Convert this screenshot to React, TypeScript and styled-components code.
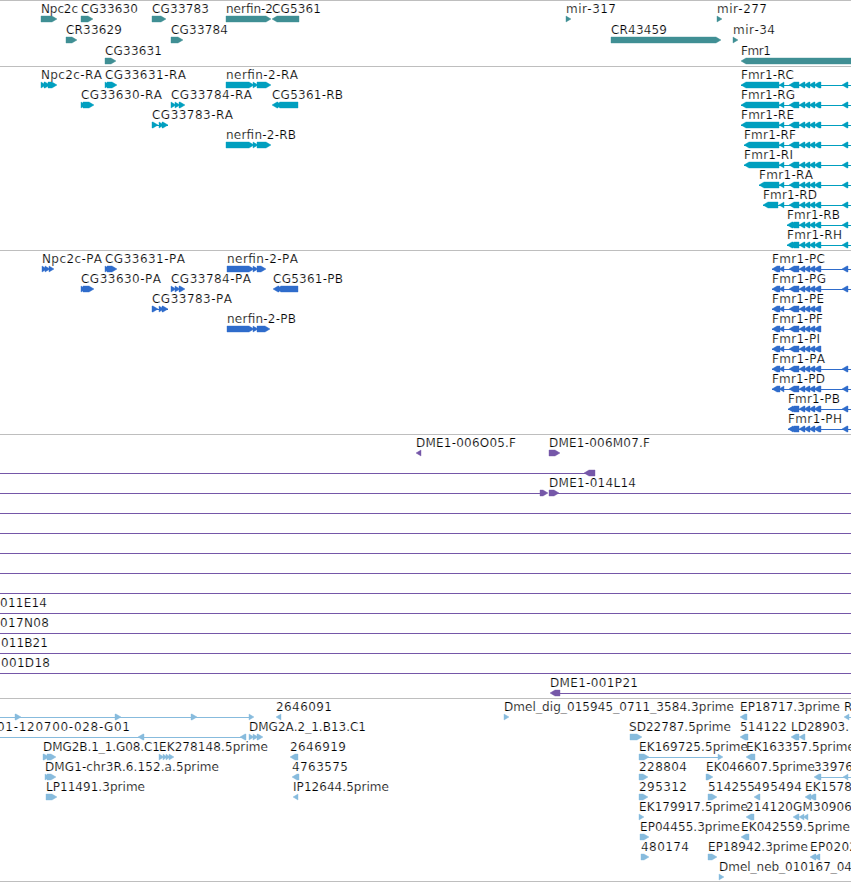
import React from "react";
import styled, { createGlobalStyle } from "styled-components";

type Direction = "left" | "right";

// [text, x, width]
type ILabel = [string, number, number];

// [start, end, direction]
type IExon = [number, number, Direction];

// [start, end]
type ILine = [number, number];

interface IRow {
  labels?: ILabel[];
  exons?: IExon[];
  lines?: ILine[];
}

interface ITrack {
  name: string;
  color: string;
  rowHeight: number;
  bottom: number;
  rows: IRow[];
}

interface IStyleProps {
  $height: number;
}

interface ITrackProps {
  $color: string;
  $bottom: number;
}

const VIEW_WIDTH = 851;
const HEAD = 5;
const MID = 16;

const right = (...spans: ILine[]): IExon[] => spans.map(([a, b]) => [a, b, "right"]);
const left = (...spans: ILine[]): IExon[] => spans.map(([a, b]) => [a, b, "left"]);

// exons shared by all Fmr1 transcripts
const fmrCore: ILine[] = [
  [789, 799],
  [799, 805],
  [804, 810],
  [809, 815],
  [814, 821],
];
const fmrFull: ILine[] = [...fmrCore, [842, 848]];

const genes: IRow[] = [
  {
    labels: [
      ["Npc2c", 41, 37],
      ["CG33630", 81, 57],
      ["CG33783", 152, 57],
      ["nerfin-2", 226, 47],
      ["CG5361", 272, 49],
      ["mir-317", 566, 50],
      ["mir-277", 717, 50],
    ],
    exons: [
      ...right([41, 57], [81, 93], [152, 166], [226, 271], [566, 571], [717, 722]),
      ...left([272, 299]),
    ],
  },
  {
    labels: [
      ["CR33629", 66, 56],
      ["CG33784", 171, 57],
      ["CR43459", 611, 56],
      ["mir-34", 733, 42],
    ],
    exons: right([66, 77], [171, 183], [611, 721], [733, 738]),
  },
  {
    labels: [
      ["CG33631", 105, 57],
      ["Fmr1", 741, 30],
    ],
    exons: [...right([105, 116]), ...left([741, 860])],
  },
];

const transcripts: IRow[] = [
  {
    labels: [
      ["Npc2c-RA", 41, 61],
      ["CG33631-RA", 105, 81],
      ["nerfin-2-RA", 226, 72],
      ["Fmr1-RC", 741, 53],
    ],
    exons: [
      ...right([41, 46], [44, 50], [48, 57], [105, 110], [107, 117]),
      ...right([226, 254], [253, 258], [257, 271]),
      ...left([741, 779], [779, 784], ...fmrFull),
    ],
    lines: [[741, 851]],
  },
  {
    labels: [
      ["CG33630-RA", 81, 81],
      ["CG33784-RA", 171, 81],
      ["CG5361-RB", 272, 71],
      ["Fmr1-RG", 741, 54],
    ],
    exons: [
      ...right([81, 86], [83, 94], [171, 176], [175, 180], [179, 185]),
      ...left([272, 278], [275, 298], [741, 779], [779, 784], ...fmrFull),
    ],
    lines: [[741, 851]],
  },
  {
    labels: [
      ["CG33783-RA", 152, 81],
      ["Fmr1-RE", 741, 53],
    ],
    exons: [
      ...right([152, 158], [159, 164], [162, 168]),
      ...left([741, 779], [779, 784], ...fmrFull),
    ],
    lines: [
      [152, 168],
      [741, 851],
    ],
  },
  {
    labels: [
      ["nerfin-2-RB", 226, 70],
      ["Fmr1-RF", 744, 52],
    ],
    exons: [
      ...right([226, 254], [253, 258], [257, 271]),
      ...left([744, 779], [779, 784], ...fmrFull),
    ],
    lines: [[744, 851]],
  },
  {
    labels: [["Fmr1-RI", 744, 49]],
    exons: left([744, 779], [779, 784], ...fmrFull),
    lines: [[744, 851]],
  },
  {
    labels: [["Fmr1-RA", 759, 54]],
    exons: left([759, 779], [779, 784], ...fmrFull),
    lines: [[759, 851]],
  },
  {
    labels: [["Fmr1-RD", 763, 54]],
    exons: left([763, 778], [779, 784], ...fmrFull),
    lines: [[763, 851]],
  },
  {
    labels: [["Fmr1-RB", 787, 53]],
    exons: left([787, 793], ...fmrFull),
    lines: [[787, 851]],
  },
  {
    labels: [["Fmr1-RH", 787, 55]],
    exons: left([787, 793], ...fmrFull),
    lines: [[787, 851]],
  },
];

const proteins: IRow[] = [
  {
    labels: [
      ["Npc2c-PA", 42, 60],
      ["CG33631-PA", 105, 80],
      ["nerfin-2-PA", 227, 71],
      ["Fmr1-PC", 772, 53],
    ],
    exons: [
      ...right([42, 47], [45, 50], [49, 54], [105, 110], [107, 117]),
      ...right([227, 254], [253, 258], [257, 266]),
      ...left([772, 780], [779, 784], ...fmrFull),
    ],
    lines: [[772, 851]],
  },
  {
    labels: [
      ["CG33630-PA", 81, 80],
      ["CG33784-PA", 171, 80],
      ["CG5361-PB", 273, 70],
      ["Fmr1-PG", 772, 54],
    ],
    exons: [
      ...right([81, 86], [83, 94], [171, 176], [175, 180], [179, 185]),
      ...left([273, 279], [276, 298], [772, 780], [779, 784], ...fmrFull),
    ],
    lines: [[772, 851]],
  },
  {
    labels: [
      ["CG33783-PA", 152, 80],
      ["Fmr1-PE", 772, 52],
    ],
    exons: [
      ...right([152, 158], [159, 164], [162, 168]),
      ...left([772, 780], [779, 784], ...fmrCore),
    ],
    lines: [
      [152, 168],
      [772, 821],
    ],
  },
  {
    labels: [
      ["nerfin-2-PB", 227, 69],
      ["Fmr1-PF", 772, 51],
    ],
    exons: [
      ...right([227, 254], [253, 258], [257, 270]),
      ...left([772, 780], [779, 784], ...fmrCore),
    ],
    lines: [[772, 821]],
  },
  {
    labels: [["Fmr1-PI", 772, 48]],
    exons: left([772, 780], [779, 784], ...fmrCore),
    lines: [[772, 821]],
  },
  {
    labels: [["Fmr1-PA", 772, 53]],
    exons: left([772, 780], [779, 784], ...fmrFull),
    lines: [[772, 851]],
  },
  {
    labels: [["Fmr1-PD", 772, 53]],
    exons: left([772, 780], [779, 784], ...fmrFull),
    lines: [[772, 851]],
  },
  {
    labels: [["Fmr1-PB", 788, 52]],
    exons: left([788, 793], ...fmrFull),
    lines: [[788, 851]],
  },
  {
    labels: [["Fmr1-PH", 788, 54]],
    exons: left([788, 793], ...fmrFull),
    lines: [[788, 851]],
  },
];

const fullLine: IRow = { lines: [[0, 851]] };

const clones: IRow[] = [
  {
    labels: [
      ["DME1-006O05.F", 416, 100],
      ["DME1-006M07.F", 549, 101],
    ],
    exons: [...left([416, 421]), ...right([549, 560])],
  },
  { exons: left([584, 595]), lines: [[0, 586]] },
  {
    labels: [["DME1-014L14", 549, 87]],
    exons: right([540, 548], [549, 559]),
    lines: [
      [0, 541],
      [554, 851],
    ],
  },
  fullLine,
  fullLine,
  fullLine,
  fullLine,
  fullLine,
  { ...fullLine, labels: [["011E14", 0, 47]] },
  { ...fullLine, labels: [["017N08", 0, 49]] },
  { ...fullLine, labels: [["011B21", 1, 47]] },
  { ...fullLine, labels: [["001D18", 1, 49]] },
  {
    labels: [["DME1-001P21", 550, 88]],
    exons: left([550, 560]),
    lines: [[558, 851]],
  },
];

const ests: IRow[] = [
  {
    labels: [
      ["2646091", 276, 56],
      ["Dmel_dig_015945_0711_3584.3prime", 504, 230],
      ["EP18717.3prime", 740, 100],
      ["R", 844, 8],
    ],
    exons: [
      ...right([15, 21], [115, 121], [191, 197], [249, 254], [504, 509]),
      ...left([276, 281], [740, 747], [844, 849]),
    ],
    lines: [
      [0, 250],
      [847, 851],
    ],
  },
  {
    labels: [
      ["01-120700-028-G01", -3, 133],
      ["DMG2A.2_1.B13.C1", 249, 117],
      ["SD22787.5prime", 629, 102],
      ["514122", 740, 47],
      ["LD28903.", 791, 58],
    ],
    exons: [
      ...right([249, 254], [253, 258], [257, 263], [630, 642]),
      ...left([138, 144], [240, 246], [740, 748], [791, 799], [799, 805]),
    ],
    lines: [[0, 242]],
  },
  {
    labels: [
      ["DMG2B.1_1.G08.C1", 43, 117],
      ["EK278148.5prime", 159, 109],
      ["2646919", 290, 56],
      ["EK169725.5prime", 639, 109],
      ["EK163357.5prime", 746, 109],
    ],
    exons: [
      ...right([43, 49], [47, 56], [159, 164], [163, 167], [166, 170], [169, 174]),
      ...right([639, 649], [718, 723]),
      ...left([290, 298], [746, 755]),
    ],
    lines: [[644, 719]],
  },
  {
    labels: [
      ["DMG1-chr3R.6.152.a.5prime", 45, 174],
      ["4763575", 292, 56],
      ["228804", 639, 48],
      ["EK046607.5prime", 706, 109],
      ["33976", 814, 39],
    ],
    exons: [
      ...right([45, 50], [47, 56], [639, 648], [706, 713]),
      ...left([292, 299], [814, 821], [843, 848]),
    ],
    lines: [[818, 851]],
  },
  {
    labels: [
      ["LP11491.3prime", 46, 99],
      ["IP12644.5prime", 293, 96],
      ["295312", 639, 48],
      ["514255", 708, 47],
      ["495494", 754, 48],
      ["EK1578", 805, 47],
    ],
    exons: [
      ...right([46, 57], [639, 648], [708, 717]),
      ...left([293, 298], [754, 760], [805, 811], [809, 816]),
    ],
  },
  {
    labels: [
      ["EK179917.5prime", 639, 109],
      ["214120", 746, 47],
      ["GM30906", 793, 59],
    ],
    exons: [...right([639, 644]), ...left([746, 754], [793, 799], [799, 804], [803, 808])],
  },
  {
    labels: [
      ["EP04455.3prime", 640, 100],
      ["EK042559.5prime", 741, 109],
    ],
    exons: [...right([640, 649]), ...left([741, 749])],
  },
  {
    labels: [
      ["480174", 641, 48],
      ["EP18942.3prime", 708, 100],
      ["EP0202", 810, 47],
    ],
    exons: [...right([641, 649], [708, 717]), ...left([810, 816], [814, 820])],
  },
  {
    labels: [["Dmel_neb_010167_04", 719, 133]],
    exons: right([719, 724]),
  },
];

const tracks: ITrack[] = [
  { name: "genes", color: "#408f94", rowHeight: 21, bottom: 0, rows: genes },
  { name: "transcripts", color: "#009fbf", rowHeight: 20, bottom: 1, rows: transcripts },
  { name: "proteins", color: "#2f6ccb", rowHeight: 20, bottom: 1, rows: proteins },
  { name: "clones", color: "#7557a8", rowHeight: 20, bottom: 1, rows: clones },
  { name: "ests", color: "#87bbdd", rowHeight: 20, bottom: 0, rows: ests },
];

const exonPoints = ([start, end, direction]: IExon) => {
  const top = MID - 3;
  const bottom = MID + 3;
  const head = Math.min(HEAD, end - start);
  if (direction === "right") {
    const neck = end - head;
    return `${start},${top} ${neck},${top} ${end},${MID} ${neck},${bottom} ${start},${bottom}`;
  }
  const neck = start + head;
  return `${end},${top} ${neck},${top} ${start},${MID} ${neck},${bottom} ${end},${bottom}`;
};

const FeatureRow: React.FC<{ row: IRow; height: number }> = ({ row, height }) => {
  const { labels = [], exons = [], lines = [] } = row;

  return (
    <RowCanvas $height={height} width={VIEW_WIDTH} height={height}>
      {lines.map(([start, end]) => (
        <Connector key={start} x={start} y={16} width={end - start} height={1} />
      ))}
      {exons.map((exon, i) => (
        <Exon key={i} points={exonPoints(exon)} />
      ))}
      {labels.map(([text, x, width]) => (
        <Label key={text} x={x} y={10} textLength={width}>
          {text}
        </Label>
      ))}
    </RowCanvas>
  );
};

const App: React.FC = () => {
  return (
    <>
      <GlobalStyle />
      <Browser>
        {tracks.map((track) => (
          <Track key={track.name} $color={track.color} $bottom={track.bottom}>
            {track.rows.map((row, i) => (
              <FeatureRow key={i} row={row} height={track.rowHeight} />
            ))}
          </Track>
        ))}
      </Browser>
    </>
  );
};

export default App;

const GlobalStyle = createGlobalStyle`
  body {
    margin: 0;
    background-color: white;
  }
`;

const Browser = styled.main`
  width: ${VIEW_WIDTH}px;
  height: 882px;
  box-sizing: border-box;
  display: flex;
  flex-direction: column;
  overflow: hidden;
  border-bottom: 1px solid #bebebe;
`;

const Track = styled.section<ITrackProps>`
  display: flex;
  flex-direction: column;
  padding: 2px 0 ${(props) => props.$bottom}px;
  border-top: 1px solid #bebebe;
  color: ${(props) => props.$color};
`;

const RowCanvas = styled.svg<IStyleProps>`
  display: block;
  flex: none;
  height: ${(props) => props.$height}px;
`;

const Connector = styled.rect`
  fill: currentColor;
  shape-rendering: crispEdges;
`;

const Exon = styled.polygon`
  fill: currentColor;
  stroke: currentColor;
  stroke-width: 0.4px;
  stroke-linejoin: round;
`;

const Label = styled.text`
  font-family: "DejaVu Sans", Verdana, sans-serif;
  font-size: 12px;
  font-kerning: none;
  fill: #000;
  stroke: #fff;
  stroke-width: 0.2px;
`;
